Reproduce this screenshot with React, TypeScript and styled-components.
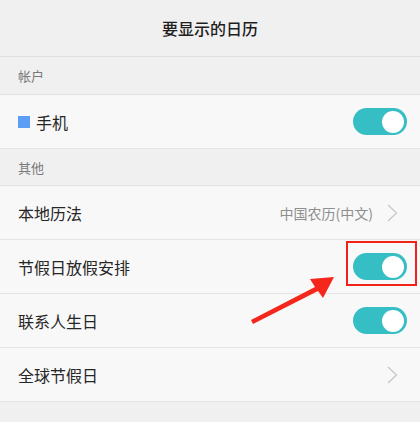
import React from 'react';
import styled, { createGlobalStyle } from 'styled-components';

const GlobalStyle = createGlobalStyle`
  html, body {
    margin: 0;
    padding: 0;
    background: #f0f0f0;
  }
  body {
    font-family: "Noto Sans CJK SC", "Noto Sans", sans-serif;
  }
`;

type Item =
  | { kind: 'section'; label: string; first?: boolean }
  | { kind: 'toggle'; label: string; dot?: boolean; highlight?: boolean }
  | { kind: 'link'; label: string; value?: string };

const items: Item[] = [
  { kind: 'section', label: '帐户', first: true },
  { kind: 'toggle', label: '手机', dot: true },
  { kind: 'section', label: '其他' },
  { kind: 'link', label: '本地历法', value: '中国农历(中文)' },
  { kind: 'toggle', label: '节假日放假安排', highlight: true },
  { kind: 'toggle', label: '联系人生日' },
  { kind: 'link', label: '全球节假日' },
];

const App: React.FC = () => {
  return (
    <>
      <GlobalStyle />
      <Page>
        <Header>要显示的日历</Header>
        {items.map((item, i) => {
          if (item.kind === 'section') {
            return (
              <Section key={i} $first={!!item.first}>
                {item.label}
              </Section>
            );
          }
          return (
            <Row key={i}>
              <Label>
                {item.kind === 'toggle' && item.dot && <Dot />}
                {item.label}
              </Label>
              {item.kind === 'toggle' ? (
                <ToggleWrap $highlight={!!item.highlight}>
                  <Toggle>
                    <Thumb />
                  </Toggle>
                </ToggleWrap>
              ) : (
                <Trail>
                  {item.value && <Value>{item.value}</Value>}
                  <svg width="11" height="18" viewBox="0 0 11 18">
                    <path d="M1 1 L9.5 9 L1 17" fill="none" stroke="#c8c8c8" strokeWidth="1.3" />
                  </svg>
                </Trail>
              )}
            </Row>
          );
        })}
        <Arrow width="420" height="422" viewBox="0 0 420 422">
          <polygon
            points="251,320 315,287 310,279 334,277 323,298 318,291 253,324"
            fill="#f5261b"
          />
        </Arrow>
      </Page>
    </>
  );
};

const Page = styled.div`
  position: relative;
  width: 420px;
  height: 422px;
  overflow: hidden;
  background: #f0f0f0;
`;

const Header = styled.div`
  height: 56px;
  display: flex;
  align-items: center;
  justify-content: center;
  font-size: 16px;
  font-weight: 500;
  color: #1e1e1e;
  border-bottom: 1px solid #dedede;
`;

const Section = styled.div<{ $first: boolean }>`
  height: ${(p) => (p.$first ? 37 : 36)}px;
  display: flex;
  align-items: center;
  padding: 0 18px;
  font-size: 13px;
  color: #7a7a7a;
  border-bottom: 1px solid #e2e2e2;
`;

const Row = styled.div`
  height: 53px;
  display: flex;
  align-items: center;
  justify-content: space-between;
  padding: 0 13px 0 18px;
  background: #f8f8f8;
  border-bottom: 1px solid #e4e4e4;
`;

const Label = styled.div`
  display: flex;
  align-items: center;
  gap: 6px;
  font-size: 16px;
  color: #262626;
`;

const Dot = styled.span`
  width: 12px;
  height: 12px;
  background: #5c9df5;
`;

const ToggleWrap = styled.div<{ $highlight: boolean }>`
  position: relative;
  display: flex;
  &::after {
    content: '';
    display: ${(p) => (p.$highlight ? 'block' : 'none')};
    position: absolute;
    left: -7px;
    top: -12px;
    width: 67px;
    height: 41px;
    border: 2px solid #f2221a;
  }
`;

const Toggle = styled.div`
  width: 54px;
  height: 27px;
  border-radius: 14px;
  background: #35bec3;
  display: flex;
  align-items: center;
  justify-content: flex-end;
  padding-right: 3px;
  box-sizing: border-box;
`;

const Thumb = styled.span`
  width: 22px;
  height: 22px;
  border-radius: 50%;
  background: #ffffff;
`;

const Trail = styled.div`
  display: flex;
  align-items: center;
  gap: 14px;
  padding-right: 9px;
`;

const Value = styled.span`
  font-size: 14px;
  color: #8e8e8e;
`;

const Arrow = styled.svg`
  position: absolute;
  left: 0;
  top: 0;
  pointer-events: none;
`;

export default App;
